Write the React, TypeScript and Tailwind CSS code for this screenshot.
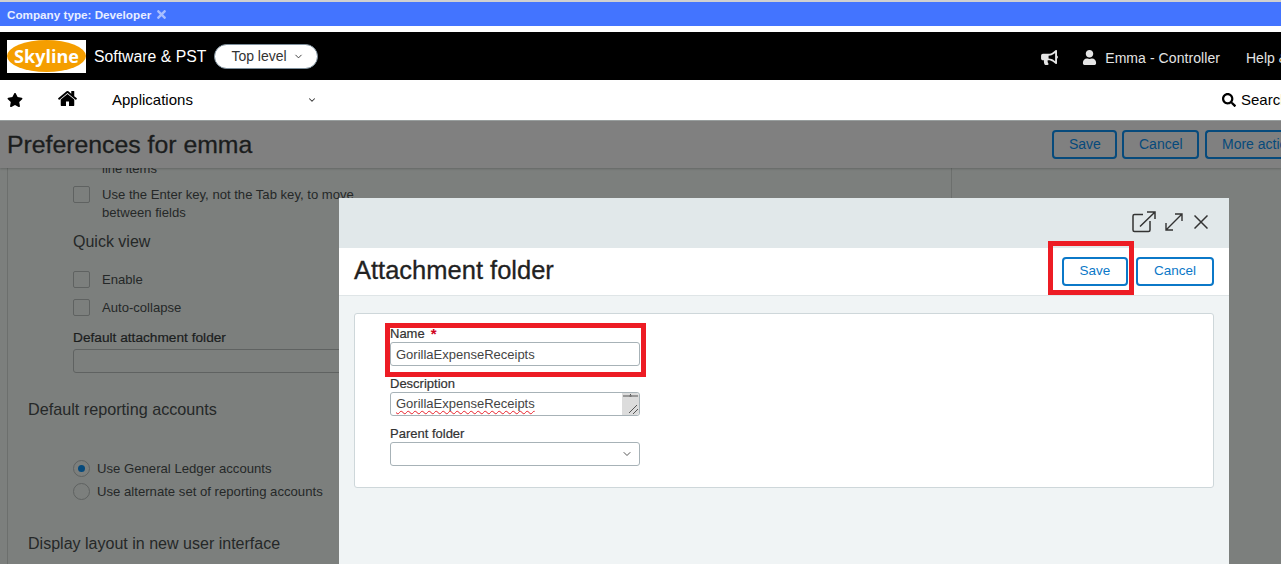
import { ChevronDown } from "lucide-react";
import { FaStar, FaBullhorn, FaUser, FaTimes, FaSearch } from "react-icons/fa";

const sans = "font-['Liberation_Sans',Arial,sans-serif]";

const Check = ({ label }: { label: string }) => (
  <div className="flex h-[28px] items-center">
    <span className="h-[17px] w-[17px] shrink-0 rounded-[2px] border border-[#5f6261]" />
    <span className="ml-[12px] mt-[1px] text-[13.1px] text-[#252828]">{label}</span>
  </div>
);

const Radio = ({ label, on }: { label: string; on?: boolean }) => (
  <div className="flex h-[23px] items-center">
    <span className="flex h-[17px] w-[17px] shrink-0 items-center justify-center rounded-full border border-[#5f6261]">
      {on && <span className="h-[7px] w-[7px] rounded-full bg-[#064a7c]" />}
    </span>
    <span className="ml-[7px] text-[13.15px] text-[#252828]">{label}</span>
  </div>
);

const HeadBtn = ({ label, w }: { label: string; w: string }) => (
  <button className={`h-[29px] shrink-0 whitespace-nowrap rounded-[4px] border-2 border-[#064a7c] text-left text-[14px] text-[#064a7c] ${w}`}>
    {label}
  </button>
);

const ModalBtn = ({ label, w }: { label: string; w: string }) => (
  <button className={`h-[29px] rounded-[4px] border-2 border-[#0b78c8] bg-white text-[13.5px] text-[#0b78c8] ${w}`}>
    {label}
  </button>
);

const Field = ({ label, children, req }: { label: string; children: React.ReactNode; req?: boolean }) => (
  <div className="h-[50px] w-[250px]">
    <div className="flex h-[14px] items-center text-[13px] leading-[14px] text-[#333] [-webkit-text-stroke:0.2px_#333]">
      {label}
      {req && <span className="ml-[6px] text-[15px] font-bold text-[#d0021b] [-webkit-text-stroke:0]">*</span>}
    </div>
    {children}
  </div>
);

export default function App() {
  return (
    <div className={`relative h-[564px] w-[1281px] overflow-hidden bg-white ${sans}`}>
      <div className="h-[2px] bg-[#d0d0d0]" />
      <div className="flex h-[24px] items-center bg-[#4374ff] pl-[7px] pt-[1px] text-[11.7px] font-bold text-[#e8eeff]">
        Company type: Developer
        <FaTimes className="ml-[5px] h-[13px] w-[11px] text-[#a9bfff]" />
      </div>

      <div className="mt-[6px] flex h-[48px] items-center whitespace-nowrap bg-black text-white">
        <div className="ml-[7px] flex h-[33px] w-[79px] items-center justify-center bg-white">
          <div className="flex h-[32px] w-[79px] items-center justify-center rounded-[50%] bg-[#f59e00] font-['Open_Sans',sans-serif] text-[18px] font-bold text-white">
            Skyline
          </div>
        </div>
        <span className="ml-[8px] mt-[1px] text-[15.8px]">Software &amp; PST</span>
        <div className="ml-[8px] mt-[1px] flex h-[25px] w-[104px] items-center rounded-full border border-[#7d8f9c] bg-white pl-[16px] text-[14px] text-[#333]">
          Top level
          <ChevronDown className="ml-[6px] h-[11px] w-[11px]" strokeWidth={2} />
        </div>
        <div className="ml-auto mt-[4px] flex items-center text-[#e4e4e4]">
          <FaBullhorn className="-mt-[1px] h-[15px] w-[17px]" />
          <FaUser className="ml-[25px] -mt-[1px] -translate-x-[1px] h-[15px] w-[15px]" />
          <span className="ml-[7px] text-[14px] tracking-[0.005em]">Emma - Controller</span>
          <span className="ml-[26px] w-[35px] overflow-hidden text-[14px]">Help &amp;</span>
        </div>
      </div>

      <div className="flex h-[40px] items-center whitespace-nowrap bg-white text-black">
        <FaStar className="ml-[7px] h-[16px] w-[16px]" />
        <svg viewBox="0 0 1792 1792" className="-mt-[3px] ml-[34px] h-[21px] w-[21px]" fill="currentColor">
          <path d="M1472 992v480q0 26-19 45t-45 19h-384v-384h-256v384h-384q-26 0-45-19t-19-45v-480q0-1 .5-3t.5-3l575-474 575 474q1 2 1 6zm223-69l-62 74q-8 9-21 11h-3q-13 0-21-7l-692-577-692 577q-12 8-24 7-13-2-21-11l-62-74q-8-10-7-23.5t11-21.5l719-599q32-26 76-26t76 26l244 204v-195q0-14 9-23t23-9h192q14 0 23 9t9 23v408l219 182q10 8 11 21.5t-7 23.5z" />
        </svg>
        <span className="ml-[34px] w-[195px] text-[15px]">Applications</span>
        <ChevronDown className="h-[10px] w-[10px] text-[#333]" strokeWidth={2.5} />
        <div className="ml-auto flex w-[60px] items-center overflow-hidden">
          <FaSearch className="ml-[1px] h-[14px] w-[14px] shrink-0" />
          <span className="ml-[5px] text-[15px]">Search</span>
        </div>
      </div>

      <div className="h-[444px] border-t border-[#9aa0a0] bg-[#7c7f7d]">
        <div className="relative flex h-[47px] items-center bg-[#808080] pl-[7px] shadow-[0_1px_2px_rgba(0,0,0,0.2)]">
          <h1 className="text-[24.8px] font-normal text-[#1b1d1d] [-webkit-text-stroke:0.3px_#1b1d1d]">Preferences for emma</h1>
          <div className="ml-auto flex overflow-hidden">
            <HeadBtn label="Save" w="w-[65px] pl-[15px]" />
            <HeadBtn label="Cancel" w="ml-[5px] w-[77px] pl-[15px]" />
            <HeadBtn label="More actions" w="ml-[6px] w-[76px] overflow-hidden pl-[15px] rounded-r-none border-r-0" />
          </div>
        </div>

        <div className="ml-[7px] h-[396px] w-[945px] overflow-hidden border-x border-[#6c6f6d] pl-[65px]">
          <div className="-mt-[6px] h-[13px] pl-[29px] text-[13px] leading-[13px] text-[#252828]">line items</div>
          <div className="mt-[10px] flex">
            <span className="mt-[1px] h-[17px] w-[17px] shrink-0 rounded-[2px] border border-[#5f6261]" />
            <span className="ml-[12px] mt-[1px] w-[270px] text-[13.1px] leading-[18px] text-[#252828]">
              Use the Enter key, not the Tab key, to move between fields
            </span>
          </div>
          <div className="mt-[11px] text-[16px] leading-[18px] text-[#252828]">Quick view</div>
          <div className="mt-[14px]">
            <Check label="Enable" />
            <Check label="Auto-collapse" />
          </div>
          <div className="mt-[9px] text-[13.7px] leading-[15px] text-[#1b1d1d] [-webkit-text-stroke:0.2px_#1b1d1d]">Default attachment folder</div>
          <div className="mt-[4px] h-[24px] w-[300px] rounded-[3px] border border-[#5f6261]" />
          <div className="-ml-[45px] mt-[27px] text-[16.200px] leading-[18px] text-[#252828]">Default reporting accounts</div>
          <div className="mt-[39px]">
            <Radio label="Use General Ledger accounts" on />
            <Radio label="Use alternate set of reporting accounts" />
          </div>
          <div className="-ml-[45px] mt-[31px] text-[16.05px] leading-[18px] text-[#252828]">Display layout in new user interface</div>
        </div>
      </div>

      {/* Modal */}
      <div className="absolute left-[339px] top-[198px] h-[366px] w-[890px] bg-[#f0f4f5]">
        <div className="flex h-[50px] items-center justify-end bg-[#e1e8ea] pb-[3px] pr-[21px] text-[#333]">
          <svg viewBox="0 0 24 22" className="h-[22px] w-[24px]" fill="none" stroke="currentColor" strokeWidth="1.5">
            <path d="M11 3.500H2.500a1.500 1.500 0 0 0-1.500 1.500v14a1.500 1.500 0 0 0 1.500 1.500h14a1.500 1.500 0 0 0 1.500-1.500v-9M8 15.500 23 1M15 1h8v7" />
          </svg>
          <svg viewBox="0 0 18 18" className="ml-[9px] h-[18px] w-[18px]" fill="none" stroke="currentColor" strokeWidth="1.4">
            <path d="M1 17 17 1M10 1h7v7M1 10v7h7" />
          </svg>
          <svg viewBox="0 0 14 14" className="ml-[11px] h-[14px] w-[14px]" fill="none" stroke="currentColor" strokeWidth="1.5">
            <path d="M.5.5l13 13M13.500.5l-13 13" />
          </svg>
        </div>
        <div className="flex h-[48px] items-center border-b border-[#dfe5e7] bg-white pb-[2px] pl-[15px] pr-[15px]">
          <h2 className="text-[25.5px] font-normal text-[#222] [-webkit-text-stroke:0.3px_#222]">Attachment folder</h2>
          <div className="ml-auto mt-[2px] flex gap-[8px]">
            <ModalBtn label="Save" w="w-[66px]" />
            <ModalBtn label="Cancel" w="w-[78px]" />
          </div>
        </div>
        <div className="mx-[15px] mt-[17px] h-[175px] rounded-[3px] border border-[#ced7da] bg-white pl-[35px] pt-[13px]">
          <Field label="Name" req>
            <div className="mt-[1px] flex h-[24px] items-center rounded-[3px] border border-[#a7b2b7] pl-[5px] pt-[1px] text-[13px] text-[#444]">
              GorillaExpenseReceipts
            </div>
          </Field>
          <Field label="Description">
            <div className="relative mt-[1px] flex h-[24px] items-center rounded-[3px] border border-[#a7b2b7] pl-[5px] text-[13px] text-[#444]">
              <span className="underline decoration-[#e8202a] decoration-wavy decoration-1 underline-offset-2">GorillaExpenseReceipts</span>
              <div className="absolute right-0 top-0 h-[22px] w-[17px] rounded-r-[3px] bg-[#dcdcdc]">
                <svg viewBox="0 0 17 22" className="h-[22px] w-[17px]" fill="none" stroke="#555" strokeWidth="1">
                  <path d="M1 3h15M7.500 3h2M8.500 1v1M7 20l8-8M11 21l5-5" />
                </svg>
              </div>
            </div>
          </Field>
          <Field label="Parent folder">
            <div className="mt-[1px] flex h-[24px] items-center justify-end rounded-[3px] border border-[#a7b2b7] pr-[6px] text-[#555]">
              <ChevronDown className="h-[12px] w-[12px]" strokeWidth={2} />
            </div>
          </Field>
        </div>
      </div>

      {/* red annotation boxes */}
      <div className="absolute left-[1048px] top-[241px] h-[54px] w-[86px] border-[5px] border-[#ed1c24]" />
      <div className="absolute left-[385px] top-[323px] h-[54px] w-[261px] border-[5px] border-[#ed1c24]" />
    </div>
  );
}
